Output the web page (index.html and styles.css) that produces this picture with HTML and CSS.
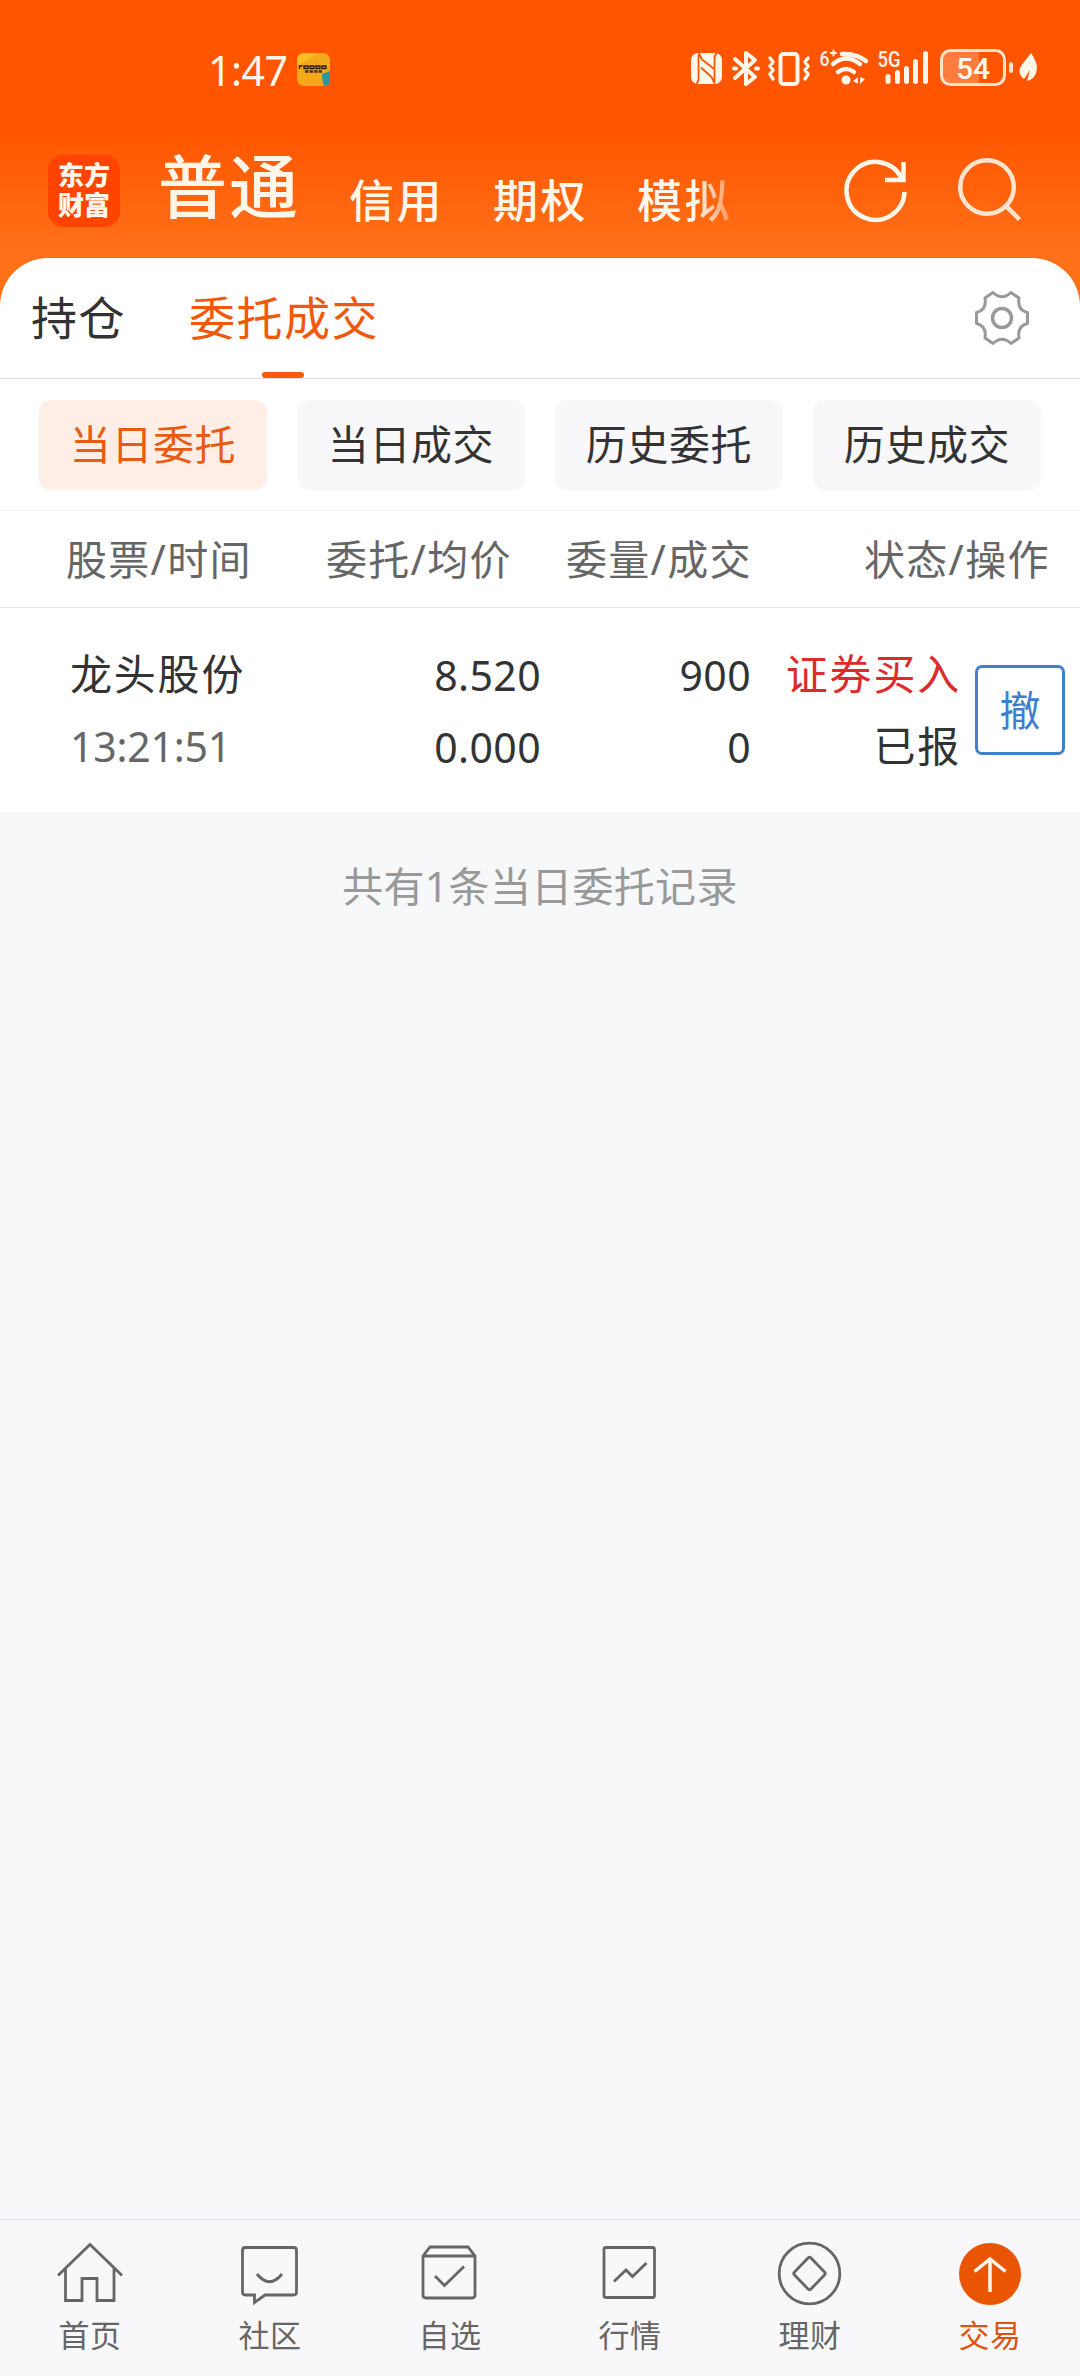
FILE: index.html
```html
<!DOCTYPE html>
<html lang="zh-CN">
<head>
    <meta charset="utf-8">
    <meta name="viewport" content="width=device-width, initial-scale=1">
    <title>委托成交</title>
    <link rel="stylesheet" href="styles.css">
</head>
<body>
    <div class="top">
        <div class="statusbar">
            <span class="clock">1:47</span>
            <svg class="app-badge" width="33" height="33" viewBox="0 0 33 33">
                <rect width="33" height="33" rx="7" fill="#f5a81c"/>
                <path d="M0 13V7a7 7 0 0 1 7-7h15z" fill="#f8bd20"/>
                <path d="M25 21l8-3v8q0 7-6 7-2-5-2-12z" fill="#2c96a0"/>
                <path d="M2.500 16v-3h3M7 13h4v2.500H7zM13 13h4v2.500h-4zM19 13h4v2.500h-4zM25 13h4v2.500h-4z" fill="none" stroke="#2a1a10" stroke-width="1.300"/>
                <path d="M8 18.500h17" stroke="#4a3208" stroke-width="2.500" stroke-dasharray="3.500 1"/>
            </svg>
            <svg class="status-icons" width="352" height="44" viewBox="688 48 352 44" fill="none" stroke="#fff6ea" stroke-linecap="round" stroke-linejoin="round">
                <!-- nfc -->
                <rect x="691" y="54" width="31" height="31" rx="7" fill="#fff6ea" stroke="none"/>
                <path d="M698.500 56v25l-2 4M714.500 83V58l2-4M699 54.500l3 6 11.500 9M701.500 69l10 9 3 6" stroke="#ff5500" stroke-width="1.700"/>
                <!-- bluetooth -->
                <path d="M735 60l20 18-9 7V54l9 7-20 18" stroke-width="4"/>
                <path d="M734 69.500h2M756 69.500h2" stroke-width="4"/>
                <!-- vibrate -->
                <rect x="780.500" y="55" width="17" height="30" rx="3" stroke-width="4"/>
                <path d="M770 59l3 4-3 4 3 4-3 4 3 5M808 59l-3 4 3 4-3 4 3 4-3 5" stroke-width="3.500"/>
                <!-- wifi -->
                <path d="M842 55q14-1 24 7M833 65q13-11 27 0M838 73q8-6 16 0" stroke-width="4.500"/>
                <circle cx="846" cy="81" r="4.500" fill="#fff6ea" stroke="none"/>
                <path d="M853 82l5-4v7zM865 80l-5 5v-7z" fill="#fff6ea" stroke="none"/>
                <text class="net" x="819.500" y="66.500" font-size="21" textLength="10" lengthAdjust="spacingAndGlyphs">6</text>
                <path d="M831 54h5M833.500 51.500v5" stroke-width="2"/>
                <!-- signal -->
                <text class="net" x="877.500" y="68" font-size="22" textLength="23" lengthAdjust="spacingAndGlyphs">5G</text>
                <path d="M888 77.500v5M897.500 73.500v9M906.500 69.500v13M915.500 62.500v20M925.500 54.500v28" stroke-width="5"/>
                <!-- battery -->
                <path d="M950 53h29v32h-29q-8 0-8-8V61q0-8 8-8z" fill="#ff7c3d" stroke="none"/>
                <rect x="941.500" y="51.500" width="63" height="34" rx="9" stroke="#ffe3cb" stroke-width="3"/>
                <path d="M1011 65v7" stroke="#ffe3cb" stroke-width="4"/>
                <text class="battery" x="956" y="80" font-size="30">54</text>
                <!-- power saving leaf -->
                <path d="M1031 54q10 14 3 24-3 3-7 4l3-11-6 9q-9-7 0-17 4-5 7-9z" fill="#fff6ea" stroke="none"/>
            </svg>
        </div>

        <div class="navbar">
            <div class="logo"><span>东方</span><span>财富</span></div>
            <div class="accounts">
                <span class="account active">普通</span>
                <span class="account">信用</span>
                <span class="account">期权</span>
                <span class="account">模<span class="fade">拟</span></span>
            </div>
            <svg class="nav-icon" width="72" height="72" viewBox="840 155 72 72" fill="none" stroke="#fff6ea" stroke-width="4.500">
                <path d="M904.500 192a29 29 0 1 1-3-14"/>
                <path d="M903.500 162v18H885"/>
            </svg>
            <svg class="nav-icon" width="72" height="72" viewBox="953 155 72 72" fill="none" stroke="#ffe4d0" stroke-width="4.500">
                <circle cx="987" cy="187" r="26.800"/>
                <path d="M1006 206l13.500 13.500"/>
            </svg>
        </div>
    </div>

    <div class="panel">
        <div class="tabs">
            <div class="tab">持仓</div>
            <div class="tab active">委托成交</div>
            <svg class="gear" width="60" height="60" viewBox="-30 -30 60 60" fill="none" stroke="#999" stroke-linejoin="round">
                <path d="M-9-25.500Q0-17 9-25.500L17-20Q15-8 25.500-5.500V5.500Q15 8 17 20L9 25.500Q0 17-9 25.500L-17 20Q-15 8-25.500 5.500V-5.500Q-15-8-17-20Z" stroke-width="3"/>
                <circle r="9.500" stroke-width="3.500"/>
            </svg>
        </div>

        <div class="chips">
            <div class="chip active">当日委托</div>
            <div class="chip">当日成交</div>
            <div class="chip">历史委托</div>
            <div class="chip">历史成交</div>
        </div>

        <div class="table-head">
            <span>股票/时间</span>
            <span>委托/均价</span>
            <span>委量/成交</span>
            <span>状态/操作</span>
        </div>

        <div class="order">
            <div class="cell name">
                <div>龙头股份</div>
                <div class="time">13:21:51</div>
            </div>
            <div class="cell num">
                <div>8.520</div>
                <div>0.000</div>
            </div>
            <div class="cell num">
                <div>900</div>
                <div>0</div>
            </div>
            <div class="cell state">
                <div class="buy">证券买入</div>
                <div>已报</div>
            </div>
            <div class="cancel">撤</div>
        </div>
    </div>

    <p class="summary">共有1条当日委托记录</p>

    <div class="tabbar">
        <div class="item">
            <svg width="68" height="68" viewBox="56 2240 68 68">
                <path d="M58 2275.500l32-31 32 31M65.500 2269v31.500H82V2278.500h15v22h17V2269"/>
            </svg>
            <span>首页</span>
        </div>
        <div class="item">
            <svg width="68" height="68" viewBox="236 2240 68 68">
                <path d="M245.500 2247.500h48q3 0 3 3v41.500q0 3-3 3H265l-10.500 7.500v-7.500h-9q-3 0-3-3v-41.500q0-3 3-3z"/>
                <path d="M257 2274q12.500 15.500 25 0"/>
            </svg>
            <span>社区</span>
        </div>
        <div class="item">
            <svg width="68" height="68" viewBox="416 2240 68 68">
                <path d="M423 2256l7-9h38l7 9v39q0 3-3 3h-46q-3 0-3-3zM423 2256h52"/>
                <path d="M435 2276l9.500 9.500 19.500-19"/>
            </svg>
            <span>自选</span>
        </div>
        <div class="item">
            <svg width="68" height="68" viewBox="596 2240 68 68">
                <rect x="604" y="2247.500" width="50.500" height="50" rx="2"/>
                <path d="M614 2281.500l12-11.500 6.500 6.500 14-13.500"/>
            </svg>
            <span>行情</span>
        </div>
        <div class="item">
            <svg width="68" height="68" viewBox="776 2240 68 68">
                <circle cx="809.500" cy="2273.500" r="30.300"/>
                <path d="M808 2258q1.500-1.500 3 0l13.500 14q1.500 1.500 0 3l-13.500 14q-1.500 1.500-3 0l-13.500-14q-1.500-1.500 0-3z"/>
            </svg>
            <span>理财</span>
        </div>
        <div class="item active">
            <svg width="68" height="68" viewBox="956 2240 68 68">
                <circle class="disc" cx="990" cy="2274" r="31"/>
                <path class="arrow" d="M990 2292v-33M974.500 2271.500l15.500-12.500 15.500 12.500"/>
            </svg>
            <span>交易</span>
        </div>
    </div>
</body>
</html>
```
FILE: styles.css
```css
* { box-sizing: border-box; margin: 0; padding: 0; }
body {
    width: 1080px;
    height: 2376px;
    display: flex;
    flex-direction: column;
    font-family: "Noto Sans", "Noto Sans CJK SC", sans-serif;
    background: #f7f8fa;
    color: #333;
    overflow: hidden;
    white-space: nowrap;
}
svg { display: block; flex: none; }

/* orange header */
.top {
    height: 318px;
    background: linear-gradient(#ff5500 130px, #ff7018 250px);
}
.statusbar {
    height: 138px;
    padding: 0 40px 0 208px;
    display: flex;
    align-items: center;
    color: #fff6ea;
}
.clock {
    width: 89px;
    padding-top: 2px;
    font-size: 41px;
    letter-spacing: -0.5px;
}
.status-icons { margin-left: auto; }
.net, .battery {
    fill: #fff6ea;
    stroke: none;
    font-family: Roboto, sans-serif;
    font-weight: 500;
}
.navbar {
    height: 106px;
    padding-left: 48px;
    display: flex;
    align-items: center;
    color: #fff6ea;
}
.logo {
    width: 72px;
    height: 72px;
    padding-top: 5px;
    border-radius: 15px;
    background: #ff4400;
    font-size: 26px;
    font-weight: 900;
    line-height: 30px;
    text-align: center;
}
.logo span { display: block; }
.accounts {
    width: 720px;
    padding-left: 38px;
    display: flex;
    align-items: center;
}
.account {
    width: 144px;
    padding-top: 19px;
    font-size: 45px;
    font-weight: 500;
    line-height: 60px;
    letter-spacing: 2.5px;
}
.account.active {
    width: 191px;
    padding: 0 0 10px;
    font-size: 69px;
    line-height: 80px;
    letter-spacing: 2px;
}
.fade {
    color: transparent;
    background: linear-gradient(90deg, #fff6ea 25%, #ff9a60 95%);
    -webkit-background-clip: text;
    background-clip: text;
}
.nav-icon + .nav-icon { margin-left: 41px; }

/* white sheet */
.panel {
    margin-top: -60px;
    height: 554px;
    background: #fff;
    border-radius: 48px 48px 0 0;
}
.tabs {
    height: 121px;
    padding: 0 48px 0 31px;
    display: flex;
    border-bottom: 1px solid #dedede;
}
.tab {
    margin-right: 63px;
    position: relative;
    font-size: 46px;
    line-height: 118px;
    letter-spacing: 1.5px;
}
.tab.active { color: #f0580c; }
.tab.active::after {
    content: "";
    position: absolute;
    left: 50%;
    bottom: 0;
    width: 42px;
    height: 6px;
    margin-left: -22px;
    border-radius: 3px;
    background: #fa5a0a;
}
.gear { margin: 30px 0 0 auto; }
.chips {
    height: 132px;
    padding: 21px 39px;
    display: grid;
    grid-template-columns: repeat(4, 228px);
    gap: 30px;
    border-bottom: 1px solid #f5f5f5;
}
.chip {
    height: 90px;
    border-radius: 12px;
    background: #f8f8fa;
    font-size: 41px;
    line-height: 88px;
    text-align: center;
    letter-spacing: 0.6px;
}
.chip.active { background: #ffeee6; color: #e95b13; }
.table-head {
    height: 97px;
    padding-left: 66px;
    display: grid;
    grid-template-columns: 260px 240px 298px 190px;
    border-bottom: 1px solid #e8e8e8;
    color: #666;
    font-size: 41px;
    line-height: 96px;
    letter-spacing: 1.3px;
}
.order {
    height: 204px;
    padding-left: 70px;
    display: flex;
    align-items: center;
    font-size: 42px;
    line-height: 72px;
}
.cell { text-align: right; }
.name { width: 261px; text-align: left; letter-spacing: 1.8px; }
.time {
    color: #666;
    font-size: 41px;
    letter-spacing: -0.2px;
}
.num { width: 210px; font-size: 41px; padding-top: 1px; letter-spacing: 0.4px; }
.state { width: 210px; letter-spacing: 1.8px; }
.buy { color: #dc2b2b; }
.cancel {
    width: 90px;
    height: 90px;
    margin-left: 14px;
    border: 3px solid #4380c9;
    border-radius: 7px;
    color: #3f7fcc;
    font-size: 41px;
    line-height: 84px;
    text-align: center;
}
.summary {
    padding-top: 44px;
    color: #999;
    font-size: 41px;
    line-height: 60px;
    letter-spacing: 0.3px;
    text-align: center;
}

/* bottom bar */
.tabbar {
    height: 157px;
    margin-top: auto;
    padding-top: 20px;
    display: grid;
    grid-template-columns: repeat(6, 180px);
    border-top: 1px solid #dfe2e5;
    background: #f8f8fa;
    color: #666;
}
.item {
    display: flex;
    flex-direction: column;
    align-items: center;
    font-size: 31px;
    line-height: 54px;
    letter-spacing: 0.5px;
}
.item svg { fill: none; stroke: #666; stroke-width: 2.8; }
.item.active { color: #dd5410; }
.item .disc { fill: #ea5504; stroke: none; }
.item .arrow { stroke: #fff6ea; stroke-width: 3.5; }
```
